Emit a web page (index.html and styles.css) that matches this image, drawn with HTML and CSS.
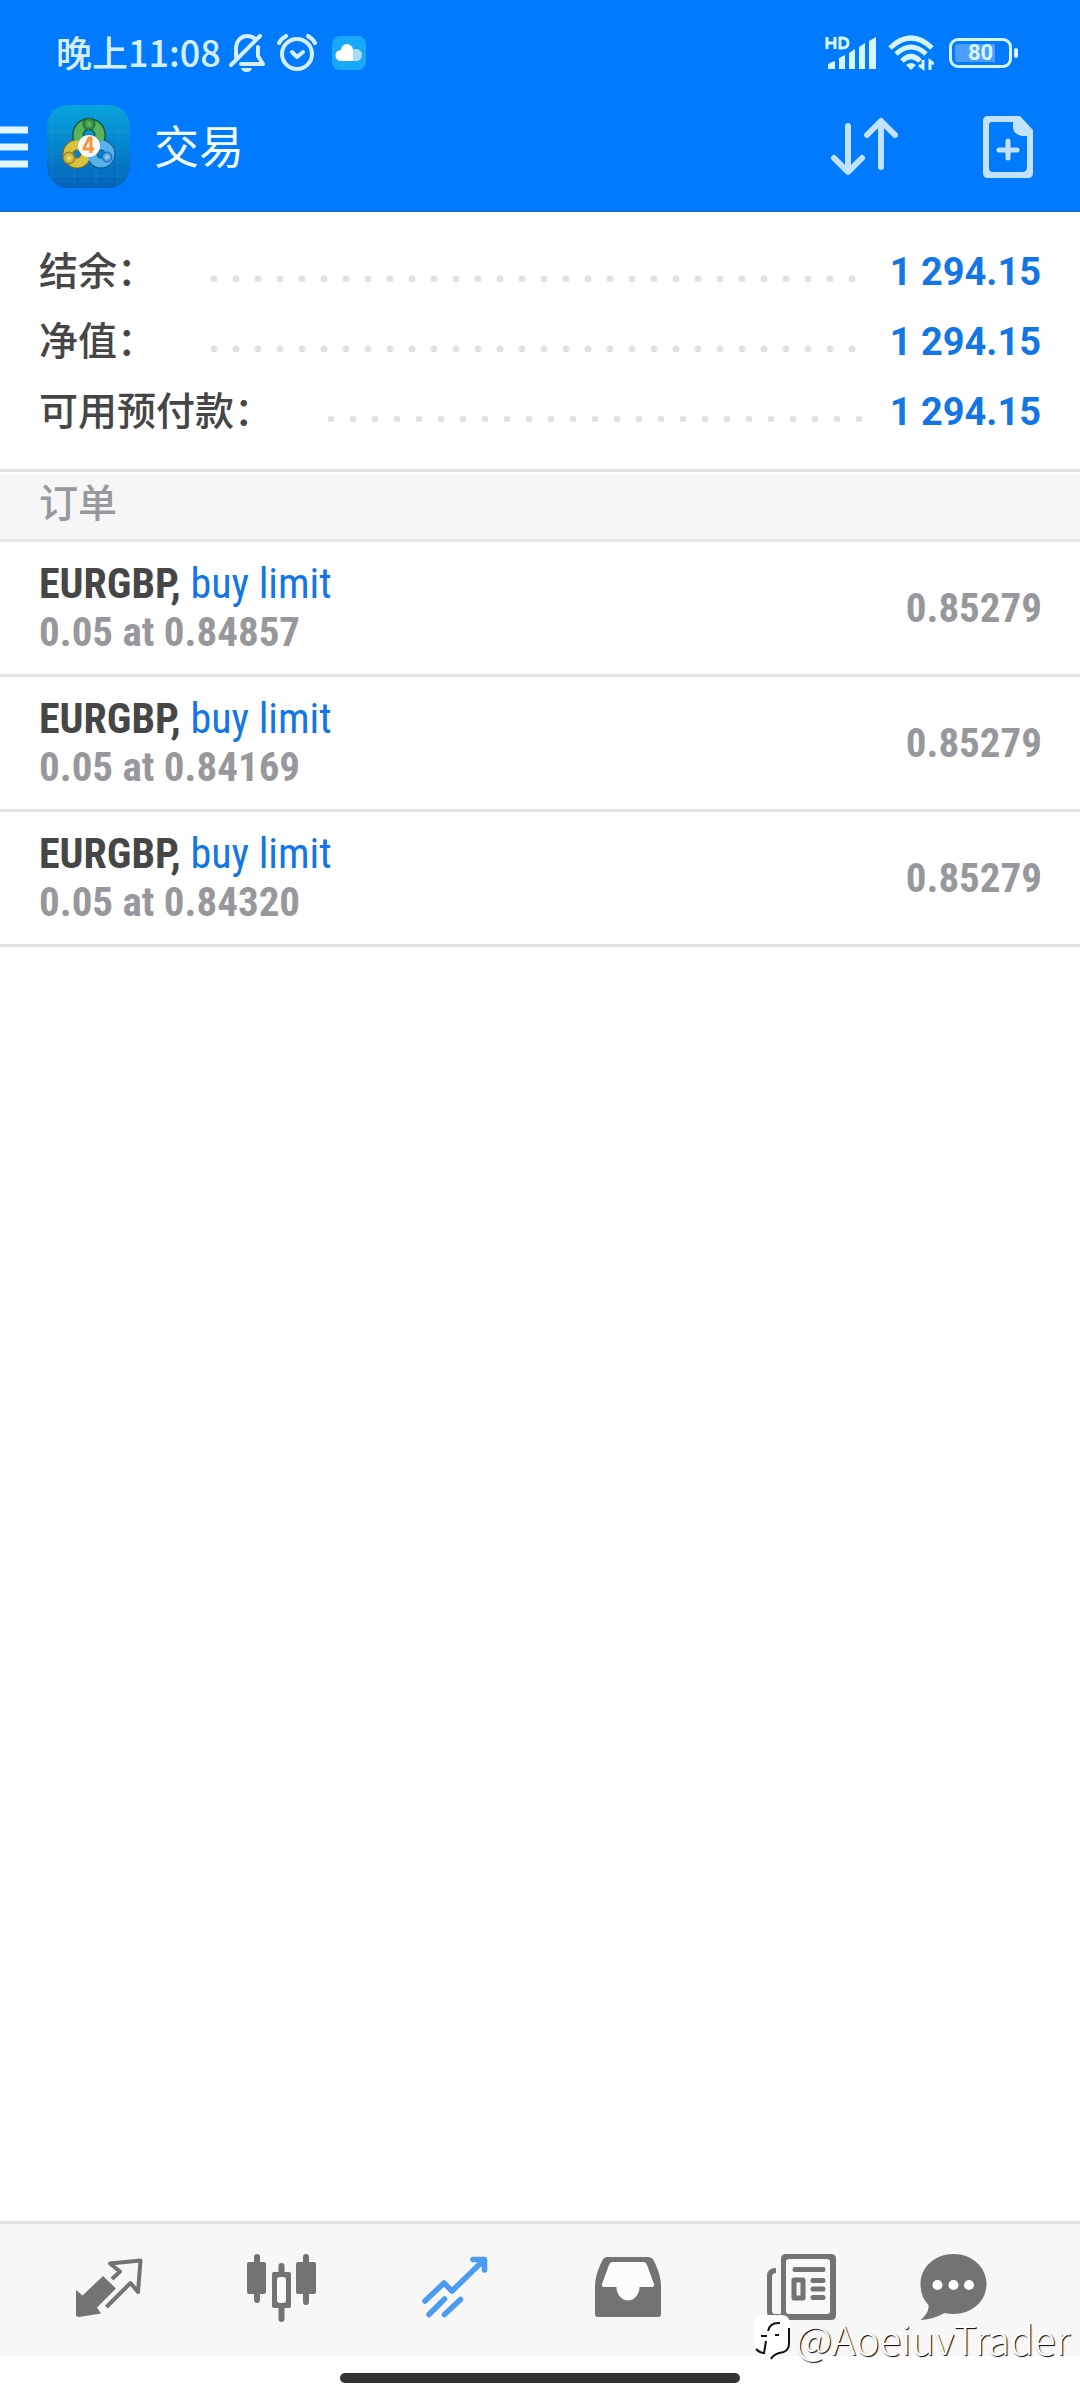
FILE: index.html
```html
<!DOCTYPE html>
<html lang="zh-CN">
<head>
<meta charset="utf-8">
<meta name="viewport" content="width=device-width, initial-scale=1">
<title>交易</title>
<link rel="stylesheet" href="styles.css">
</head>
<body>
<header class="header">
  <div class="status">
    <span class="status-time">晚上11:08</span>
    <svg class="status-bell" width="36" height="38" viewBox="0 0 36 38" aria-hidden="true">
      <g fill="none" stroke="#d6efff" stroke-width="4" stroke-linecap="round" stroke-linejoin="round">
        <path d="M2 31 31 2"/><path d="M7 23V15C7 7 12 2 18 2q4 0 7 2"/><path d="M29 13v9l5 8H12"/>
      </g>
      <path d="M12 34h11q-1 4-5.500 4T12 34z" fill="#d6efff"/>
    </svg>
    <svg class="status-alarm" width="40" height="38" viewBox="0 0 40 38" aria-hidden="true">
      <g fill="none" stroke="#d6efff" stroke-width="4" stroke-linecap="round" stroke-linejoin="round">
        <circle cx="20" cy="20" r="15"/><path d="m15 18 5 5 6-5"/><path d="M2 9q2-4 7-7M38 9q-2-4-7-7"/>
      </g>
    </svg>
    <svg class="status-cloud" width="34" height="34" viewBox="0 0 34 34" aria-hidden="true">
      <rect width="34" height="34" rx="8" fill="#19a9fb"/>
      <circle cx="24" cy="19" r="6" fill="#a6dcff"/>
      <path d="M9 25a5 5 0 0 1 0-11 6 6 0 0 1 12 0v11z" fill="#fff"/>
      <path d="M21 14v11h3a6 6 0 0 0 0-12z" fill="#a6dcff"/>
    </svg>
    <span class="spacer"></span>
    <svg class="status-signal" width="51" height="34" viewBox="0 0 51 34" aria-hidden="true">
      <g fill="none" stroke="#d6f6ff" stroke-width="3"><path d="M2 1v12M10 1v12M2 7h8M15 2h2q6 0 6 5t-6 5h-2z"/></g>
      <path d="M3 33v-4q0-2 7-4v8zM14 33V22l6-3v14zM24 33V17l6-4v20zM34 33V11l6-4v26zM44 33V5l7-4v32z" fill="#d6f6ff"/>
    </svg>
    <svg class="status-wifi" width="46" height="36" viewBox="0 0 46 36" aria-hidden="true">
      <g fill="none" stroke="#d6f6ff" stroke-width="5"><path d="M2 13q21-20 42 0"/><path d="M8 19q15-14 30 0"/><path d="M14 26q9-9 18 0"/></g>
      <path d="M18 30q5-4 10 0l-5 5z" fill="#d6f6ff"/>
      <path d="M35 25v8l-4-3M42 35v-9l4 3" fill="none" stroke="#d6f6ff" stroke-width="3"/>
    </svg>
    <span class="battery"><span class="battery-level">80</span></span>
  </div>
  <div class="appbar">
    <button class="icon-button menu" aria-label="菜单">
      <svg width="28" height="42" viewBox="0 0 28 42"><path d="M0 4h28M0 21h28M0 38h28" stroke="#e2f6ff" stroke-width="7"/></svg>
    </button>
    <svg class="logo" width="83" height="83" viewBox="0 0 83 83" aria-hidden="true">
      <defs>
        <linearGradient id="sky" x1="0" y1="0" x2="0" y2="1"><stop offset="0" stop-color="#08a4dc"/><stop offset=".5" stop-color="#0584cb"/><stop offset="1" stop-color="#0462b8"/></linearGradient>
        <radialGradient id="green"><stop offset="0" stop-color="#6fbf68"/><stop offset="1" stop-color="#1f7d35"/></radialGradient>
        <radialGradient id="gold"><stop offset="0" stop-color="#f3e67a"/><stop offset="1" stop-color="#b39a1d"/></radialGradient>
        <radialGradient id="blue"><stop offset="0" stop-color="#9fdcff"/><stop offset="1" stop-color="#2b86cf"/></radialGradient>
      </defs>
      <rect width="83" height="83" rx="21" fill="url(#sky)"/>
      <path d="M27 0v83M49 0v83M71 2v79M5 4v75M0 27h83M0 49h83M0 71h83" stroke="#3db4e8" stroke-opacity=".2" fill="none"/>
      <circle cx="42" cy="30" r="11" fill="none" stroke="#0b5c45" stroke-width="12"/>
      <circle cx="30" cy="49" r="9" fill="none" stroke="#806c14" stroke-width="11"/>
      <circle cx="54" cy="49" r="9" fill="none" stroke="#09548e" stroke-width="11"/>
      <circle cx="42" cy="30" r="11" fill="none" stroke="#58b35a" stroke-width="9"/>
      <circle cx="30" cy="49" r="9" fill="none" stroke="#d8c244" stroke-width="9"/>
      <circle cx="54" cy="49" r="9" fill="none" stroke="#58b1ea" stroke-width="9"/>
      <circle cx="42" cy="19" r="6" fill="url(#green)" stroke="#176c38"/>
      <circle cx="22" cy="53" r="6" fill="url(#gold)" stroke="#90791a"/>
      <circle cx="60" cy="52" r="5" fill="url(#blue)" stroke="#1c6bad"/>
      <circle cx="42" cy="41" r="11" fill="#f8f8fa"/>
      <path d="M44 48V33h-2l-5 10v1h10" fill="none" stroke="#f09a3e" stroke-width="3"/>
    </svg>
    <h1 class="title">交易</h1>
    <span class="spacer"></span>
    <button class="icon-button sort" aria-label="排序">
      <svg width="68" height="60" viewBox="0 0 68 60"><g fill="none" stroke="#c3e2ff" stroke-width="6" stroke-linecap="round" stroke-linejoin="round"><path d="M18 9v45M4 41l14 14 14-14M51 50V5M37 18 51 4l14 14"/></g></svg>
    </button>
    <button class="icon-button new-order" aria-label="新订单">
      <svg width="50" height="62" viewBox="0 0 50 62"><path d="M5 0h32l13 14v43q0 5-5 5H5q-5 0-5-5V5q0-5 5-5zM9 6q-3 0-3 3v43q0 4 4 4h29q5 0 5-5V20h-5q-9-2-9-9V6z" fill="#c3e2ff" fill-rule="evenodd"/><path d="M25 25v17M16 34h18" stroke="#c3e2ff" stroke-width="5" stroke-linecap="round"/></svg>
    </button>
  </div>
</header>

<main class="content">
  <dl class="summary">
    <div class="summary-row"><dt>结余：</dt><dd>1 294.15</dd></div>
    <div class="summary-row"><dt>净值：</dt><dd>1 294.15</dd></div>
    <div class="summary-row"><dt>可用预付款：</dt><dd>1 294.15</dd></div>
  </dl>
  <h2 class="section">订单</h2>
  <ul class="orders">
    <li class="order">
      <div><p class="order-name"><b>EURGBP,</b> <span>buy limit</span></p><p class="order-detail">0.05 at 0.84857</p></div>
      <span class="order-price">0.85279</span>
    </li>
    <li class="order">
      <div><p class="order-name"><b>EURGBP,</b> <span>buy limit</span></p><p class="order-detail">0.05 at 0.84169</p></div>
      <span class="order-price">0.85279</span>
    </li>
    <li class="order">
      <div><p class="order-name"><b>EURGBP,</b> <span>buy limit</span></p><p class="order-detail">0.05 at 0.84320</p></div>
      <span class="order-price">0.85279</span>
    </li>
  </ul>
</main>

<footer class="footer">
  <nav class="tabs">
    <button class="tab" aria-label="行情">
      <svg viewBox="0 0 68 68"><path d="M2 36 8.500 41.500 29 22 42 34.500 23 53.500 27 59.500 5 63 2 62z" fill="currentColor"/><path d="M38 25 46 17.500 36 9.500 66.500 6.500 64 38 56.500 29 32.500 53" fill="none" stroke="currentColor" stroke-width="4" stroke-linejoin="round"/></svg>
    </button>
    <button class="tab" aria-label="图表">
      <svg viewBox="0 0 68 68"><g stroke="currentColor" stroke-width="6" stroke-linecap="round"><path d="M10 3v43M34.500 12v53M59 3v45"/></g><rect y="8" width="19" height="32" rx="2" fill="currentColor"/><rect x="49" y="8" width="20" height="32" rx="2" fill="currentColor"/><rect x="25" y="18" width="19" height="36" rx="2" fill="currentColor"/><rect x="30" y="23" width="9" height="26" rx="3" fill="#fafafa"/></svg>
    </button>
    <button class="tab tab-active" aria-label="交易" aria-current="page">
      <svg viewBox="0 0 68 68"><g fill="none" stroke="currentColor" stroke-width="5.500" stroke-linecap="round" stroke-linejoin="round"><path d="M5 47 24 29l8 8L64 6M53 5.500h11.500V16M9 60.500 24.500 45M24.500 60.500 40.500 45.500"/></g></svg>
    </button>
    <button class="tab" aria-label="历史">
      <svg viewBox="0 0 68 68"><path d="M14 3h41q4 0 6 4 7 14 7 25v28q0 3-3 3H5q-3 0-3-3V32Q2 21 9 7q2-4 5-4z" fill="currentColor"/><path d="M20 8h30q3 0 4 3l7 19q1 3-2 3H46.500a11.500 13.500 0 0 1-23 0H11q-3 0-2-3l7-19q1-3 4-3z" fill="#fcfcfc"/></svg>
    </button>
    <button class="tab" aria-label="新闻">
      <svg viewBox="0 0 68 68"><path d="M20 0h45q5 0 5 5v56q0 5-5 5H9q-8 0-8-8V22q0-8 9-8v5q-4 0-4 4v34q0 3 3 3h6V5q0-5 5-5z" fill="currentColor"/><rect x="20" y="5" width="44" height="55" rx="3" fill="#f8f8f8"/><path d="M29 15.500h28M47 26.500h10M47 35h10M47 43.500h10" stroke="currentColor" stroke-width="5" stroke-linecap="round"/><rect x="28" y="26" width="9" height="18" fill="none" stroke="currentColor" stroke-width="5" stroke-linejoin="round"/></svg>
    </button>
    <button class="tab" aria-label="消息">
      <svg viewBox="0 0 68 68"><path d="M14.500 0C33 0 47.500 13 47.500 30S33 60 14.500 60q-5 0-9-1-10 6-24 7 9-7 8-15-8-8-8-21C-18.500 13-4 0 14.500 0z" fill="currentColor"/><g fill="#fff"><circle cx="-1.500" cy="31" r="5"/><circle cx="14.500" cy="31" r="5"/><circle cx="30" cy="31" r="5"/></g></svg>
    </button>
  </nav>
  <div class="home"><span class="home-bar"></span></div>
  <div class="watermark">
    <svg width="38" height="46" viewBox="0 0 38 46" aria-hidden="true">
      <path d="M10 0h18q9 0 9 9v19q0 8-8 10-6 0-10 5-1-3 1-6H10q-9-2-9-10V9q0-9 9-9z" fill="#fff"/>
      <path d="M8 21h6M27 8q-10-1-12 8M13 26l-2 12q-4 0-8-4M36 13v16q0 8-10 9-6 2-8 6M22 20h4" fill="none" stroke="#111" stroke-width="2"/>
    </svg>
    <span>@AoeiuvTrader</span>
  </div>
</footer>
</body>
</html>
```
FILE: styles.css
```css
* {
  box-sizing: border-box;
  margin: 0;
  padding: 0;
}

body {
  display: flex;
  flex-direction: column;
  min-height: 100vh;
  background: #fff;
  color: #464646;
  font-family: Roboto, "Noto Sans CJK SC", sans-serif;
}

button {
  border: 0;
  background: none;
  cursor: pointer;
}

svg {
  display: block;
  flex: none;
}

.spacer {
  flex: 1;
}

/* Header */
.header {
  padding-bottom: 24px;
  background: #007aff;
  box-shadow: inset 0 -2px 0 #0a70e0;
}

.status {
  display: flex;
  align-items: center;
  height: 105px;
  padding: 0 68px 0 56px;
}

.status-time {
  padding-bottom: 4px;
  color: #d6efff;
  font: 500 36px/48px "Noto Sans CJK SC", sans-serif;
}

.status-bell {
  margin-left: 8px;
}

.status-alarm {
  margin-left: 12px;
}

.status-cloud {
  margin-left: 15px;
}

.status-wifi {
  margin: 0 15px 0 12px;
}

.battery {
  position: relative;
  width: 63px;
  height: 30px;
  padding: 3px;
  border: 3px solid #d6f6ff;
  border-radius: 9px;
}

.battery::after {
  content: "";
  position: absolute;
  top: 7px;
  right: -9px;
  width: 4px;
  height: 10px;
  border-radius: 2px;
  background: #d6f6ff;
}

.battery-level {
  display: block;
  border-radius: 3px;
  background: linear-gradient(90deg, #4d9fff 78%, transparent 78%);
  color: #d6f6ff;
  font: 700 22px/18px Roboto, sans-serif;
  text-align: center;
}

.appbar {
  display: flex;
  align-items: center;
  padding-right: 47px;
}

.logo {
  margin: 0 24px 0 19px;
}

.title {
  padding-bottom: 4px;
  color: #f2fcff;
  font: 400 45px/60px "Noto Sans CJK SC", sans-serif;
}

.sort {
  margin-right: 85px;
}

/* Account summary */
.content {
  flex: 1;
}

.summary {
  padding: 23px 39px 24px;
  border-bottom: 3px solid #e3e3e3;
}

.summary-row {
  display: flex;
  align-items: center;
  height: 70px;
}

.summary-row dt {
  padding-bottom: 5px;
  font: 500 39px/58px "Noto Sans CJK SC", sans-serif;
}

.summary-row::before {
  content: "";
  order: 1;
  flex: 1;
  height: 7px;
  margin: 17px 24px 0 54px;
  background: radial-gradient(circle at 4px 4px, #e2e2e2 3px, transparent 4px) 0 0 / 22px 7px repeat-x;
}

.summary-row dd {
  order: 2;
  padding-top: 3px;
  color: #1276e4;
  font-size: 38px;
  font-weight: 700;
  line-height: 48px;
}

.section {
  margin-top: 3px;
  padding: 0 39px 13px;
  border-bottom: 3px solid #e3e3e3;
  background: #f6f6f6;
  color: #98999c;
  font: 500 39px/51px "Noto Sans CJK SC", sans-serif;
}

/* Orders */
.orders {
  list-style: none;
  font-family: "Roboto Condensed", "Liberation Sans Narrow", Roboto, sans-serif;
  font-size: 42px;
  line-height: 48px;
}

.order {
  display: flex;
  align-items: center;
  justify-content: space-between;
  height: 135px;
  padding: 0 38px 0 39px;
  border-bottom: 3px solid #e3e3e3;
}

.order-name span {
  color: #1276e4;
}

.order-detail,
.order-price {
  color: #97989b;
  font-size: 41px;
  font-weight: 700;
}

/* Bottom bar */
.footer {
  position: relative;
}

.tabs {
  display: grid;
  grid-template-columns: repeat(6, 1fr);
  height: 135px;
  padding: 0 21px 4px;
  border-top: 3px solid #e3e3e3;
  background: #f7f7f7;
}

.tab {
  display: flex;
  align-items: center;
  justify-content: center;
  color: #737373;
}

.tab svg {
  width: 68px;
  height: 68px;
  overflow: visible;
}

.tab-active {
  color: #4a9bf2;
}

.home {
  display: flex;
  justify-content: center;
  height: 44px;
  padding-top: 17px;
}

.home-bar {
  width: 37%;
  height: 10px;
  border-radius: 5px;
  background: #333;
}

.watermark {
  position: absolute;
  right: 10px;
  bottom: 36px;
  display: flex;
  align-items: center;
  gap: 5px;
  color: #fff;
  font: 300 40px/52px "Noto Sans CJK SC", sans-serif;
  text-shadow: 1px 1px 1px #000;
}
```
